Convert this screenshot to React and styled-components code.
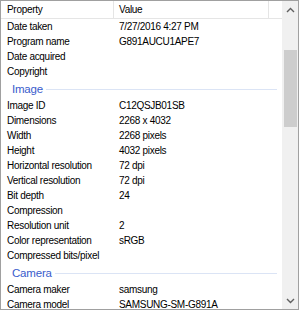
import React from "react";
import styled, { createGlobalStyle } from "styled-components";

const Global = createGlobalStyle`
  html, body { margin: 0; padding: 0; background: #ffffff; }
  body { font-family: "Liberation Sans", Arial, sans-serif; }
`;

const Frame = styled.div`
  width: 299px;
  height: 310px;
  box-sizing: border-box;
  border: 1px solid #a0a0a0;
  display: flex;
  overflow: hidden;
  background: #fff;
`;

const ListArea = styled.div`
  flex: 1;
  display: flex;
  flex-direction: column;
  min-width: 0;
  overflow: hidden;
`;

const Header = styled.div`
  display: flex;
  height: 17px;
  flex: none;
  border-bottom: 1px solid #e5e5e5;
`;

const HeaderCell = styled.div`
  width: ${(p) => p.$w}px;
  flex: none;
  box-sizing: border-box;
  padding-left: ${(p) => p.$pad}px;
  border-right: ${(p) => (p.$divider ? "1px solid #e5e5e5" : "none")};
  font-size: 10px;
  letter-spacing: -0.3px;
  line-height: 17px;
  color: #000;
  white-space: nowrap;
`;

const Row = styled.div`
  display: flex;
  height: 15px;
  flex: none;
  align-items: center;
  font-size: 10px;
  letter-spacing: -0.3px;
  color: #000;
  white-space: nowrap;
`;

const PropCell = styled.div`
  width: 112px;
  flex: none;
  padding-left: 6px;
`;

const ValueCell = styled.div`
  flex: 1;
`;

const Group = styled.div`
  display: flex;
  align-items: center;
  height: 19px;
  flex: none;
  padding-left: 11px;
  padding-right: 5px;
  gap: 3px;
`;

const GroupTitle = styled.span`
  font-size: 11.5px;
  color: #3a5ccc;
  letter-spacing: -0.2px;
  white-space: nowrap;
`;

const GroupLine = styled.div`
  flex: 1;
  height: 1px;
  background: #dbe4f5;
  margin-top: 1px;
`;

const ScrollBar = styled.div`
  width: 16px;
  flex: none;
  background: #f0f0f0;
  display: flex;
  flex-direction: column;
  align-items: center;
`;

const Arrow = styled.div`
  height: 17px;
  width: 100%;
  display: flex;
  align-items: center;
  justify-content: center;
  flex: none;
`;

const Track = styled.div`
  flex: 1;
  width: 100%;
  padding-top: 32px;
  box-sizing: border-box;
  display: flex;
  justify-content: center;
`;

const Thumb = styled.div`
  width: 13px;
  height: 77px;
  background: #cdcdcd;
`;

const Chevron = ({ up }) => (
  <svg width="9" height="6" viewBox="0 0 9 6">
    <path
      d={up ? "M1 5 L4.5 1.5 L8 5" : "M1 1 L4.5 4.5 L8 1"}
      fill="none"
      stroke="#606060"
      strokeWidth="1.4"
    />
  </svg>
);

const sections = [
  {
    rows: [
      ["Date taken", "7/27/2016 4:27 PM"],
      ["Program name", "G891AUCU1APE7"],
      ["Date acquired", ""],
      ["Copyright", ""],
    ],
  },
  {
    title: "Image",
    rows: [
      ["Image ID", "C12QSJB01SB"],
      ["Dimensions", "2268 x 4032"],
      ["Width", "2268 pixels"],
      ["Height", "4032 pixels"],
      ["Horizontal resolution", "72 dpi"],
      ["Vertical resolution", "72 dpi"],
      ["Bit depth", "24"],
      ["Compression", ""],
      ["Resolution unit", "2"],
      ["Color representation", "sRGB"],
      ["Compressed bits/pixel", ""],
    ],
  },
  {
    title: "Camera",
    rows: [
      ["Camera maker", "samsung"],
      ["Camera model", "SAMSUNG-SM-G891A"],
    ],
  },
];

export default function App() {
  return (
    <>
      <Global />
      <Frame>
        <ListArea>
          <Header>
            <HeaderCell $w={113} $pad={6} $divider>
              Property
            </HeaderCell>
            <HeaderCell $w={155} $pad={5} $divider>
              Value
            </HeaderCell>
            <HeaderCell $w={14} $pad={0} />
          </Header>
          {sections.map((s, i) => (
            <React.Fragment key={i}>
              {s.title && (
                <Group>
                  <GroupTitle>{s.title}</GroupTitle>
                  <GroupLine />
                </Group>
              )}
              {s.rows.map(([k, v]) => (
                <Row key={k}>
                  <PropCell>{k}</PropCell>
                  <ValueCell>{v}</ValueCell>
                </Row>
              ))}
            </React.Fragment>
          ))}
        </ListArea>
        <ScrollBar>
          <Arrow>
            <Chevron up />
          </Arrow>
          <Track>
            <Thumb />
          </Track>
          <Arrow>
            <Chevron />
          </Arrow>
        </ScrollBar>
      </Frame>
    </>
  );
}
